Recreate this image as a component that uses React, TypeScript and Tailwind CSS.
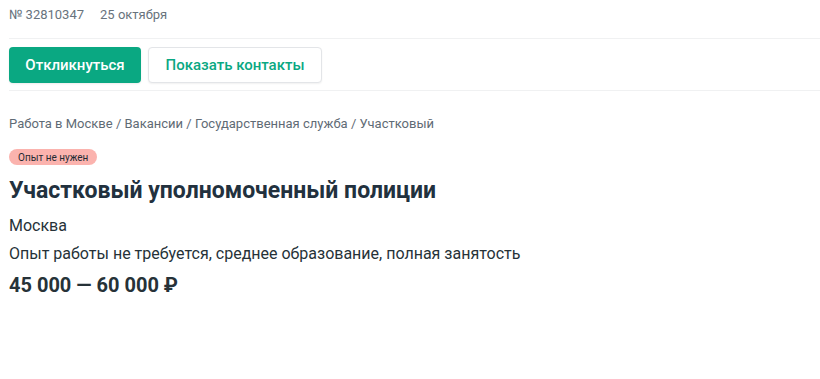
import React from 'react';

const App: React.FC = () => {
  return (
    <div className="min-h-[379px] w-[820px] bg-white pl-[9px] font-['Roboto','Liberation_Sans',sans-serif]">
      {/* Meta */}
      <div className="flex h-[39px] items-center gap-[16px] border-b border-[#f0f1f2] pb-[8px] text-[13px] text-[#68737d]">
        <span>№ 32810347</span>
        <span>25 октября</span>
      </div>

      {/* Actions */}
      <div className="flex h-[52px] items-center gap-[7px] border-b border-[#f0f1f2] pt-[1px]">
        <button className="h-[36px] w-[132px] rounded-[4px] bg-[#0aa882] text-[15px] font-medium text-white shadow-[0_1px_2px_rgba(0,0,0,0.08)]">
          Откликнуться
        </button>
        <button className="h-[36px] w-[174px] rounded-[4px] border border-[#e3e5e8] bg-white text-[15px] font-medium text-[#0aa882] shadow-[0_1px_2px_rgba(0,0,0,0.06)]">
          Показать контакты
        </button>
      </div>

      {/* Breadcrumbs */}
      <div className="mt-[25px] text-[13px] leading-[16px] text-[#5f6b75]">
        Работа в Москве / Вакансии / Государственная служба / Участковый
      </div>

      <div className="mt-[17px] flex">
        <span className="inline-flex h-[16px] items-center rounded-full bg-[#fbb3ae] px-[9px] text-[10px] text-[#1f2a33]">
          Опыт не нужен
        </span>
      </div>

      <h1 className="mt-[11px] text-[23px] font-bold leading-[30px] text-[#22313e]">
        Участковый уполномоченный полиции
      </h1>

      <div className="mt-[8px] text-[16px] leading-[24px] text-[#263238]">Москва</div>
      <div className="mt-[4px] text-[16px] leading-[24px] text-[#263238]">
        Опыт работы не требуется, среднее образование, полная занятость
      </div>
      <div className="mt-[6px] text-[20px] font-bold leading-[26px] text-[#263238]">
        45 000 — 60 000 ₽
      </div>
    </div>
  );
};

export default App;
